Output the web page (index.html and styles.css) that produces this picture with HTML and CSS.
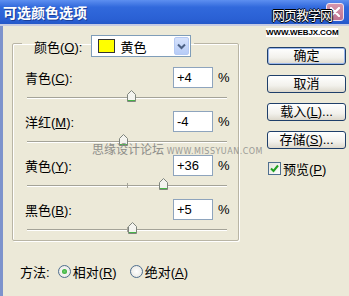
FILE: index.html
```html
<!DOCTYPE html>
<html lang="zh-CN">
<head>
    <meta charset="UTF-8">
    <meta name="viewport" content="width=device-width, initial-scale=1.0">
    <title>可选颜色选项</title>
    <link rel="stylesheet" href="styles.css">
</head>
<body>

<div class="window">
    <div class="titlebar">
        <span class="title">可选颜色选项</span>
        <span class="close-btn">
            <svg width="10" height="10" viewBox="0 0 10 10"><path d="M1 1 L9 9 M9 1 L1 9" stroke="#fff" stroke-width="2.2" stroke-linecap="round"/></svg>
        </span>
    </div>

    <div class="client">
        <div class="main">
            <fieldset class="group">
                <legend class="group-legend">
                    <div class="group-head">
                        <span class="lbl">颜色(<u>O</u>):</span>
                        <div class="select">
                            <span class="swatch"></span>
                            <span class="select-text">黄色</span>
                            <span class="select-arrow">
                                <svg width="9" height="7" viewBox="0 0 9 7"><path d="M1 1.5 L4.5 5 L8 1.5" fill="none" stroke="#4d6185" stroke-width="2"/></svg>
                            </span>
                        </div>
                    </div>
                </legend>

                <div class="row">
                    <div class="row-head">
                        <span class="lbl">青色(<u>C</u>):</span>
                        <span class="num">+4</span>
                        <span class="pct">%</span>
                    </div>
                    <div class="slider">
                        <div class="track"></div>
                        <div class="tick"></div>
                        <svg class="thumb" style="left:100px" width="9" height="12" viewBox="0 0 9 12"><path d="M0.5 4.5 L4.5 0.5 L8.5 4.5 V11.5 H0.5 Z" fill="#f4f4ef" stroke="#7f857d"/><rect x="1" y="10" width="7" height="1" fill="#48b448"/></svg>
                    </div>
                </div>

                <div class="row">
                    <div class="row-head">
                        <span class="lbl">洋红(<u>M</u>):</span>
                        <span class="num">-4</span>
                        <span class="pct">%</span>
                    </div>
                    <div class="slider">
                        <div class="track"></div>
                        <div class="tick"></div>
                        <svg class="thumb" style="left:92px" width="9" height="12" viewBox="0 0 9 12"><path d="M0.5 4.5 L4.5 0.5 L8.5 4.5 V11.5 H0.5 Z" fill="#f4f4ef" stroke="#7f857d"/><rect x="1" y="10" width="7" height="1" fill="#48b448"/></svg>
                    </div>
                </div>

                <div class="row">
                    <div class="row-head">
                        <span class="lbl">黄色(<u>Y</u>):</span>
                        <span class="num">+36</span>
                        <span class="pct">%</span>
                    </div>
                    <div class="slider">
                        <div class="track"></div>
                        <div class="tick"></div>
                        <svg class="thumb" style="left:132px" width="9" height="12" viewBox="0 0 9 12"><path d="M0.5 4.5 L4.5 0.5 L8.5 4.5 V11.5 H0.5 Z" fill="#f4f4ef" stroke="#7f857d"/><rect x="1" y="10" width="7" height="1" fill="#48b448"/></svg>
                    </div>
                </div>

                <div class="row">
                    <div class="row-head">
                        <span class="lbl">黑色(<u>B</u>):</span>
                        <span class="num">+5</span>
                        <span class="pct">%</span>
                    </div>
                    <div class="slider">
                        <div class="track"></div>
                        <div class="tick"></div>
                        <svg class="thumb" style="left:101px" width="9" height="12" viewBox="0 0 9 12"><path d="M0.5 4.5 L4.5 0.5 L8.5 4.5 V11.5 H0.5 Z" fill="#f4f4ef" stroke="#7f857d"/><rect x="1" y="10" width="7" height="1" fill="#48b448"/></svg>
                    </div>
                </div>
            </fieldset>

            <div class="method">
                <span class="lbl">方法:</span>
                <span class="radio checked"></span>
                <span class="opt">相对(<u>R</u>)</span>
                <span class="radio second"></span>
                <span class="opt">绝对(<u>A</u>)</span>
            </div>
        </div>

        <div class="side">
            <div class="btn default">确定</div>
            <div class="btn">取消</div>
            <div class="btn gap">载入(<u>L</u>)...</div>
            <div class="btn">存储(<u>S</u>)...</div>
            <div class="check-row">
                <span class="checkbox">
                    <svg width="9" height="9" viewBox="0 0 9 9"><path d="M1 4.5 L3.5 7 L8 1.5" fill="none" stroke="#21a121" stroke-width="2"/></svg>
                </span>
                <span class="opt">预览(<u>P</u>)</span>
            </div>
        </div>
    </div>

    <!-- watermarks over the screenshot -->
    <div class="mark-site">思缘设计论坛 <span class="mark-site-en">WWW.MISSYUAN.COM</span></div>
    <div class="mark-top">
        <div class="mark-cn">网页教学网</div>
        <div class="mark-en">WWW.WEBJX.COM</div>
    </div>
</div>

</body>
</html>
```

FILE: styles.css
```css
body {
    margin: 0;
    font-family: "Liberation Sans", "Noto Sans CJK SC", sans-serif;
    font-size: 13px;
    color: #000;
}

.window {
    position: relative;
    width: 349px;
    height: 296px;
    overflow: hidden;
    background-color: #ece9d8;
}

/* title bar */
.titlebar {
    height: 24px;
    border-bottom: 2px solid #c6cbe2;
    background: linear-gradient(#5d8ff0, #3169dc 30%, #2a60d4 80%, #2458c8);
    display: flex;
    align-items: center;
    padding-left: 3px;
}

.title {
    color: #fff;
    font-weight: bold;
    font-size: 14px;
    font-family: "Noto Sans CJK SC", sans-serif;
    text-shadow: 1px 1px 0 #1a3f9a;
}

.close-btn {
    margin-left: auto;
    margin-right: 5px;
    width: 18px;
    height: 18px;
    box-sizing: border-box;
    border: 1px solid #f0e4ee;
    border-radius: 3px;
    background: linear-gradient(#d596ac, #bf7390);
    display: flex;
    align-items: center;
    justify-content: center;
}

/* client area */
.client {
    display: flex;
    height: 270px;
    border-left: 3px solid #7d93cc;
}

.main {
    width: 235px;
    padding-left: 9px;
}

.group {
    box-sizing: border-box;
    width: 227px;
    margin: 3px 0 0 0;
    padding: 10px 9px 6px 12px;
    border: 1px solid #b9b5a5;
    border-radius: 2px;
    box-shadow: inset 1px 1px 0 #fff, 1px 1px 0 #fff;
}

.group-legend {
    margin-left: -3px;
    padding: 6px 3px 0 12px;
}

.group-head {
    display: flex;
    align-items: center;
    gap: 9px;
}

.select {
    box-sizing: border-box;
    width: 100px;
    height: 22px;
    border: 1px solid #7f9db9;
    background-color: #fff;
    display: flex;
    align-items: center;
}

.swatch {
    width: 15px;
    height: 12px;
    margin-left: 6px;
    background-color: #ffff00;
    border: 1px solid #333;
}

.select-text {
    margin-left: 5px;
}

.select-arrow {
    margin-left: auto;
    margin-right: 1px;
    width: 15px;
    height: 18px;
    border: 1px solid #b5c9f3;
    border-radius: 2px;
    background: linear-gradient(#d6e2fc, #b7ccf7);
    display: flex;
    align-items: center;
    justify-content: center;
    box-sizing: border-box;
}

/* rows */
.row {
    margin-bottom: 9px;
}

.row:last-child {
    margin-bottom: 0;
}

.row-head {
    display: flex;
    align-items: center;
    height: 21px;
}

.row-head .lbl {
    flex: 1;
}

.num {
    box-sizing: border-box;
    width: 40px;
    height: 21px;
    line-height: 19px;
    padding-left: 3px;
    border: 1px solid #8ea4bd;
    background-color: #fff;
}

.pct {
    margin-left: 5px;
    width: 11px;
}

.slider {
    position: relative;
    width: 200px;
    height: 14px;
    margin-left: 2px;
}

.track {
    position: absolute;
    left: 0;
    right: 0;
    top: 9px;
    height: 1px;
    background-color: #a4a398;
    border-bottom: 1px solid #fff;
}

.tick {
    position: absolute;
    left: 100px;
    top: 7px;
    width: 1px;
    height: 5px;
    background-color: #a4a398;
}

.thumb {
    position: absolute;
    top: 2px;
}

/* method */
.method {
    display: flex;
    align-items: center;
    margin: 21px 0 0 8px;
}

.radio {
    box-sizing: border-box;
    width: 13px;
    height: 13px;
    margin-left: 8px;
    border: 1px solid #4f6f8f;
    border-radius: 50%;
    background: radial-gradient(#fff, #e4e3dc);
    display: flex;
    align-items: center;
    justify-content: center;
}

.radio.checked::after {
    content: "";
    width: 5px;
    height: 5px;
    border-radius: 50%;
    background: radial-gradient(#6fd06f, #21a121);
}

.radio.second {
    margin-left: 13px;
}

.opt {
    margin-left: 2px;
}

/* buttons */
.side {
    margin-left: 20px;
    padding-top: 21px;
}

.btn {
    box-sizing: border-box;
    width: 79px;
    height: 18px;
    line-height: 16px;
    text-align: center;
    border: 1px solid #1f3f6a;
    border-radius: 3px;
    background: linear-gradient(#ffffff, #f2f1ec 60%, #dcd8cc);
    margin-bottom: 10px;
}

.btn.default {
    box-shadow: inset 0 0 0 1px #9cb8ec;
}

.btn.gap {
    margin-top: 7px;
}

.check-row {
    display: flex;
    align-items: center;
    margin-top: 6px;
    margin-left: 1px;
}

.checkbox {
    box-sizing: border-box;
    width: 13px;
    height: 13px;
    border: 1px solid #4f6f8f;
    background: linear-gradient(135deg, #e4e3dc, #fff);
    display: flex;
    align-items: center;
    justify-content: center;
}

.check-row .opt {
    margin-left: 2px;
}

/* watermarks */
.mark-site {
    position: absolute;
    left: 92px;
    top: 140px;
    color: #8e8e8a;
    font-size: 12px;
    font-family: "Noto Sans CJK SC", sans-serif;
    white-space: nowrap;
}

.mark-site-en {
    font-family: "DejaVu Sans", sans-serif;
    font-size: 8px;
    letter-spacing: 0.5px;
    color: #9a9a96;
}

.mark-top {
    position: absolute;
    left: 266px;
    top: 6px;
}

.mark-cn {
    margin-left: 6px;
    font-family: "Noto Sans CJK SC", sans-serif;
    font-size: 13px;
    line-height: 17px;
    letter-spacing: -1px;
    color: #fff;
    text-shadow: -1px 0 0 #000, 1px 0 0 #000, 0 -1px 0 #000, 0 1px 0 #000;
    white-space: nowrap;
}

.mark-en {
    display: inline-block;
    font-family: "Liberation Sans", sans-serif;
    font-weight: bold;
    font-size: 8px;
    line-height: 9px;
    letter-spacing: -0.1px;
    color: #000;
    background-color: #fff;
    white-space: nowrap;
}
```
